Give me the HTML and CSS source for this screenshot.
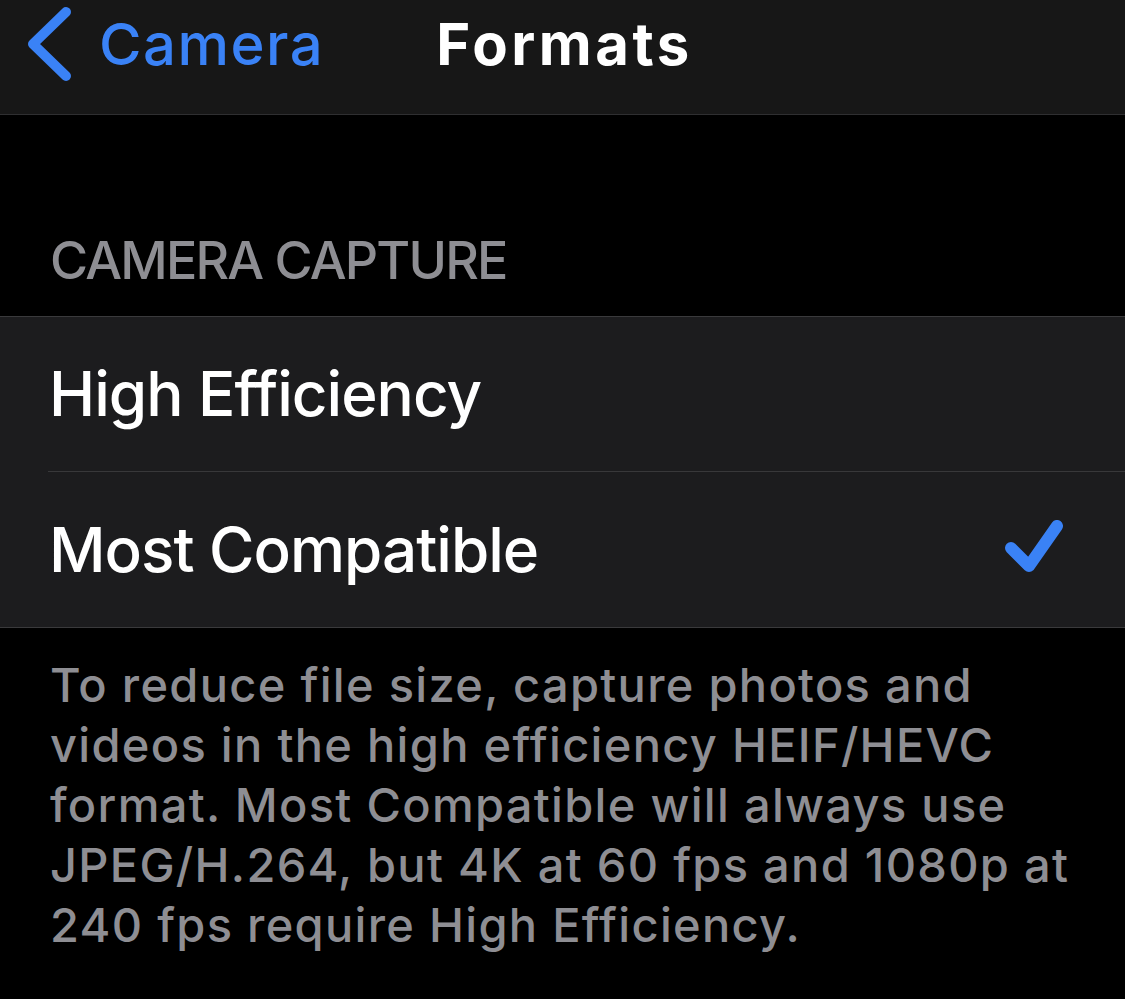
FILE: index.html
```html
<!DOCTYPE html>
<html lang="en">
<head>
<meta charset="utf-8">
<title>Formats</title>
<link rel="stylesheet" href="styles.css">
</head>
<body>
<header class="nav">
  <a class="back" href="#">
    <svg class="chev" width="48" height="76" viewBox="0 0 48 76" aria-hidden="true">
      <path d="M40 6 L7 38 L40 70" fill="none" stroke="#3a82f6" stroke-width="10" stroke-linecap="round" stroke-linejoin="round"/>
    </svg>
    <span class="back-label">Camera</span>
  </a>
  <h1 class="title">Formats</h1>
</header>
<main>
  <div class="section-head">CAMERA CAPTURE</div>
  <ul class="group">
    <li class="row"><span class="row-label">High Efficiency</span></li>
    <li class="row"><span class="row-label">Most Compatible</span>
      <svg class="check" width="64" height="60" viewBox="0 0 64 60" aria-hidden="true">
        <path d="M8 28 L26 46 L54 6" fill="none" stroke="#3a82f6" stroke-width="12" stroke-linecap="round" stroke-linejoin="round"/>
      </svg>
    </li>
  </ul>
  <p class="footer">To reduce file size, capture photos and<br>videos in the high efficiency HEIF/HEVC<br>format. Most Compatible will always use<br>JPEG/H.264, but 4K at 60 fps and 1080p at<br>240 fps require High Efficiency.</p>
</main>
</body>
</html>
```
FILE: styles.css
```css
html, body {
  margin: 0;
  padding: 0;
  background: #000;
}
body {
  font-family: Inter, "Noto Sans", "Liberation Sans", sans-serif;
  color: #fff;
  width: 1125px;
  height: 999px;
  overflow: hidden;
}
.nav {
  position: relative;
  height: 114px;
  background: #171717;
  border-bottom: 1px solid #2f2f31;
  box-sizing: content-box;
}
.back {
  display: flex;
  align-items: flex-start;
  text-decoration: none;
  color: #3a82f6;
  padding-left: 26px;
  padding-top: 6px;
}
.chev {
  display: block;
}
.back-label {
  font-size: 58px;
  line-height: 70px;
  margin-left: 25px;
  margin-top: 3px;
  letter-spacing: 1.5px;
  font-weight: 500;
}
.title {
  position: absolute;
  left: 0;
  right: 0;
  top: 9px;
  margin: 0;
  padding-left: 4px;
  text-align: center;
  font-size: 58px;
  line-height: 70px;
  font-weight: 700;
  letter-spacing: 3.5px;
}
.section-head {
  padding: 116px 0 25px 50px;
  font-size: 52px;
  line-height: 60px;
  color: #8e8e93;
  letter-spacing: -1.8px;
  font-weight: 500;
}
.group {
  list-style: none;
  margin: 0;
  padding: 0;
  background: #1c1c1e;
  border-top: 1px solid #3a3a3c;
  border-bottom: 1px solid #3a3a3c;
}
.row {
  display: flex;
  align-items: center;
  justify-content: space-between;
  height: 154px;
  margin-left: 48px;
  padding-right: 58px;
}
.row + .row {
  border-top: 1px solid #38383a;
  height: 155px;
}
.row-label {
  font-size: 62px;
  line-height: 154px;
  margin-left: 1px;
  letter-spacing: -1px;
  font-weight: 500;
}
.check {
  display: block;
}
.footer {
  margin: 0;
  padding: 27px 0 0 50px;
  font-size: 47px;
  line-height: 60px;
  color: #8e8e93;
  letter-spacing: 1.3px;
  font-weight: 500;
}
```
